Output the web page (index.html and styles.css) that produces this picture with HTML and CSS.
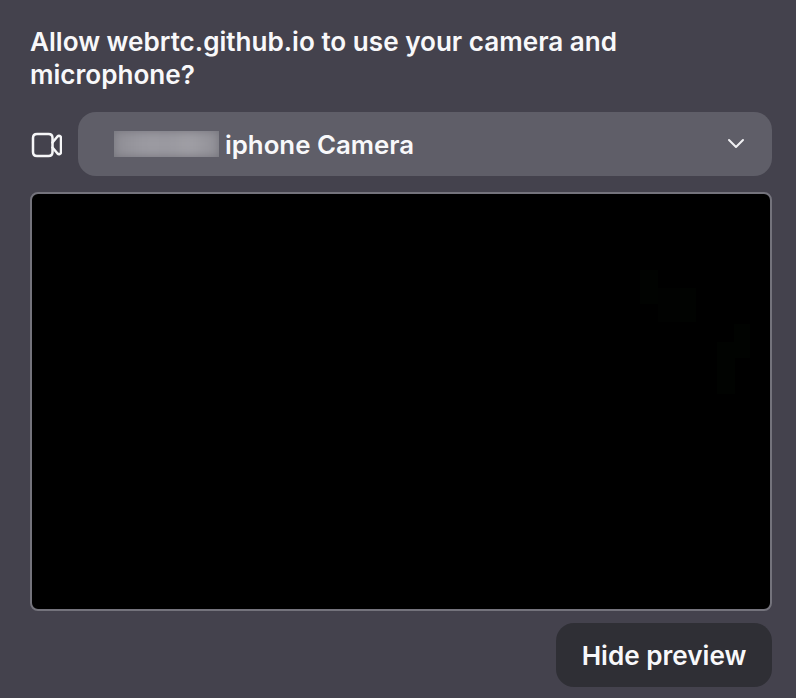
FILE: index.html
```html
<!DOCTYPE html>
<html lang="en">
<head>
<meta charset="utf-8">
<title>Camera permission</title>
<link rel="stylesheet" href="styles.css">
</head>
<body>
<main class="dialog">
  <h1 class="title">Allow webrtc.github.io to use your camera and microphone?</h1>
  <div class="device-row">
    <svg class="camera-icon" width="32" height="26" viewBox="0 0 32 26" fill="none" stroke="#f6f6f8" stroke-width="2.5" stroke-linejoin="round" stroke-linecap="round" aria-hidden="true">
      <path d="M7 2H18.500C21 2 22.500 3.500 22.500 6V20C22.500 22.500 21 24 18.500 24H7C4.500 24 3 22.500 3 20V6C3 3.500 4.500 2 7 2Z"/>
      <path d="M22.500 10.500L27.500 4.500C28.800 3.200 31 3.900 31 5.800V20.200C31 22.100 28.800 22.800 27.500 21.500L22.500 15.500"/>
    </svg>
    <div class="select">
      <span class="redacted"><span class="redacted-blur"></span></span>
      <span class="select-label">iphone Camera</span>
      <svg class="chevron" width="18" height="12" viewBox="0 0 18 12" fill="none" stroke="#f0f0f3" stroke-width="2" stroke-linecap="round" stroke-linejoin="round" aria-hidden="true">
        <path d="M2 2L9 9L16 2"/>
      </svg>
    </div>
  </div>
  <div class="preview"></div>
  <div class="actions">
    <button class="hide-button" type="button">Hide preview</button>
  </div>
</main>
</body>
</html>
```
FILE: styles.css
```css
html, body {
  margin: 0;
  height: 100%;
}

body {
  background: #44424d;
  color: #f8f8fa;
  font-family: Inter, "Liberation Sans", sans-serif;
  overflow: hidden;
}

.dialog {
  display: flex;
  flex-direction: column;
  padding: 25px 24px 0 30px;
}

.title {
  margin: 0;
  font-size: 26.1px;
  font-weight: 600;
  line-height: 33px;
}

.device-row {
  display: flex;
  align-items: center;
  gap: 16px;
  margin-top: 21px;
}

.camera-icon {
  flex: none;
  margin-top: 1px;
}

.select {
  flex: 1;
  display: flex;
  align-items: center;
  height: 64px;
  padding: 0 27px 0 36px;
  background: #5f5e68;
  border-radius: 18px;
}

.redacted {
  flex: none;
  width: 105px;
  height: 26px;
  overflow: hidden;
  background: #75747c;
}

.redacted-blur {
  display: block;
  width: 100%;
  height: 100%;
  background: linear-gradient(90deg, #8f8e95 0%, #9b9aa1 30%, #9a99a0 55%, #a09fa5 72%, #908f96 100%);
  filter: blur(5px);
}

.select-label {
  flex: 1;
  margin-left: 6px;
  font-size: 25.8px;
  font-weight: 600;
  line-height: 33px;
}

.chevron {
  flex: none;
}

.preview {
  box-sizing: border-box;
  height: 419px;
  margin-top: 16px;
  border: 2px solid #74737c;
  border-radius: 8px;
  background-color: #000;
  background-image:
    linear-gradient(#010301, #010301),
    linear-gradient(#010301, #010301),
    linear-gradient(#010301, #010301),
    linear-gradient(#010201, #010201),
    linear-gradient(#010301, #010301);
  background-size: 18px 34px, 16px 34px, 16px 34px, 24px 34px, 18px 52px;
  background-position: 608px 76px, 648px 94px, 702px 130px, 626px 94px, 685px 148px;
  background-repeat: no-repeat;
}

.actions {
  display: flex;
  justify-content: flex-end;
  margin-top: 12px;
}

.hide-button {
  width: 216px;
  height: 64px;
  padding: 0;
  border: 0;
  border-radius: 18px;
  background: #2f2f35;
  color: #f8f8fa;
  font-family: inherit;
  font-size: 26.1px;
  font-weight: 600;
}
```
